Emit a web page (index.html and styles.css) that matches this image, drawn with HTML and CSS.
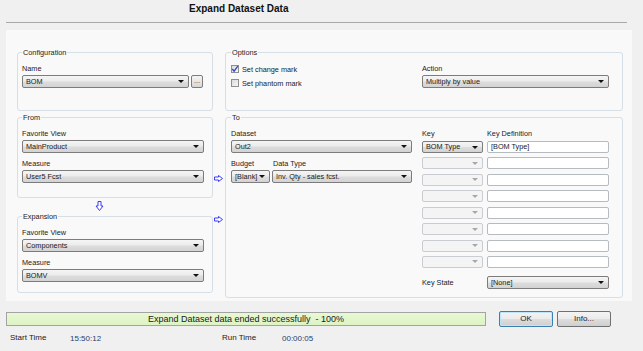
FILE: index.html
```html
<!DOCTYPE html>
<html lang="en">
<head>
  <meta charset="UTF-8" />
  <title>Expand Dataset Data</title>
  <link rel="stylesheet" href="styles.css">
</head>
<body>
  <h1 class="title">Expand Dataset Data</h1>
  <div class="rule"></div>

  <div class="panel">
    <div class="col-left">
      <fieldset class="group g-config">
        <legend>Configuration</legend>
        <div class="body">
          <div class="field">
            <span class="lbl">Name</span>
            <div class="row-inline">
              <div class="combo w-name">BOM</div>
              <div class="dots">...</div>
            </div>
          </div>
        </div>
      </fieldset>

      <fieldset class="group g-from">
        <legend>From</legend>
        <div class="body">
          <div class="field">
            <span class="lbl">Favorite View</span>
            <div class="combo">MainProduct</div>
          </div>
          <div class="field">
            <span class="lbl">Measure</span>
            <div class="combo">User5 Fcst</div>
          </div>
        </div>
      </fieldset>

      <div class="down">
        <svg width="9" height="10" viewBox="0 0 9 10"><path d="M3 0.5 H6 V5 H8 L4.5 9.5 L1 5 H3 Z" fill="#fff" stroke="#3b3bff" stroke-width="1"/></svg>
      </div>

      <fieldset class="group g-expansion">
        <legend>Expansion</legend>
        <div class="body">
          <div class="field">
            <span class="lbl">Favorite View</span>
            <div class="combo">Components</div>
          </div>
          <div class="field">
            <span class="lbl">Measure</span>
            <div class="combo">BOMV</div>
          </div>
        </div>
      </fieldset>
    </div>

    <div class="col-mid">
      <svg class="arrow a1" width="9" height="7" viewBox="0 0 9 7"><path d="M0.5 2 H4.5 V0.5 L8.5 3.5 L4.5 6.5 V5 H0.5 Z" fill="#fff" stroke="#3b3bff" stroke-width="1"/></svg>
      <svg class="arrow a2" width="9" height="7" viewBox="0 0 9 7"><path d="M0.5 2 H4.5 V0.5 L8.5 3.5 L4.5 6.5 V5 H0.5 Z" fill="#fff" stroke="#3b3bff" stroke-width="1"/></svg>
    </div>

    <div class="col-right">
      <fieldset class="group g-options">
        <legend>Options</legend>
        <div class="body options">
          <div class="checks">
            <label class="check"><span class="box"><svg width="8" height="8" viewBox="0 0 8 8"><path d="M1.3 4 L3.1 6.2 L6.8 1.2" fill="none" stroke="#2747c8" stroke-width="1.3"/></svg></span>Set change mark</label>
            <label class="check"><span class="box"></span>Set phantom mark</label>
          </div>
          <div class="field">
            <span class="lbl">Action</span>
            <div class="combo">Multiply by value</div>
          </div>
        </div>
      </fieldset>

      <fieldset class="group g-to">
        <legend>To</legend>
        <div class="body to">
          <div class="to-left">
            <div class="field">
              <span class="lbl">Dataset</span>
              <div class="combo">Out2</div>
            </div>
            <div class="field pair">
              <div class="budget">
                <span class="lbl">Budget</span>
                <div class="combo">[Blank]</div>
              </div>
              <div class="dtype">
                <span class="lbl">Data Type</span>
                <div class="combo">Inv. Qty - sales fcst.</div>
              </div>
            </div>
          </div>
          <div class="to-right">
            <div class="key-head">
              <span class="lbl k1">Key</span>
              <span class="lbl">Key Definition</span>
            </div>
            <div class="key-row"><div class="combo small">BOM Type</div><div class="input">[BOM Type]</div></div>
            <div class="key-row"><div class="combo small off"></div><div class="input"></div></div>
            <div class="key-row"><div class="combo small off"></div><div class="input"></div></div>
            <div class="key-row"><div class="combo small off"></div><div class="input"></div></div>
            <div class="key-row"><div class="combo small off"></div><div class="input"></div></div>
            <div class="key-row"><div class="combo small off"></div><div class="input"></div></div>
            <div class="key-row"><div class="combo small off"></div><div class="input"></div></div>
            <div class="key-row"><div class="combo small off"></div><div class="input"></div></div>
            <div class="key-state">
              <span class="lbl">Key State</span>
              <div class="combo">[None]</div>
            </div>
          </div>
        </div>
      </fieldset>
    </div>
  </div>

  <div class="footer">
    <div class="status">Expand Dataset data ended successfully  - 100%</div>
    <div class="btn default">OK</div>
    <div class="btn">Info...</div>
  </div>

  <div class="times">
    <span class="t-lbl">Start Time</span>
    <span class="t-val v1">15:50:12</span>
    <span class="t-lbl">Run Time</span>
    <span class="t-val">00:00:05</span>
  </div>
</body>
</html>
```

FILE: styles.css
```css
body {
  margin: 0;
  background-color: #f0f0f0;
  font-family: "Liberation Sans", Arial, sans-serif;
  font-size: 7.3px;
  color: #1b1b1b;
  width: 643px;
  height: 351px;
  overflow: hidden;
}
.title {
  margin: 3px 0 0 189px;
  font-size: 10px;
  line-height: 12px;
  font-weight: bold;
  color: #111;
}
.rule {
  margin: 7px 0 0 6px;
  width: 621px;
  height: 1px;
  background-color: #a9a9a9;
}
.panel {
  margin: 7px 0 0 6px;
  width: 626px;
  height: 271px;
  box-sizing: border-box;
  padding: 18px 9px 0 11px;
  background-color: #f9f9f9;
  display: flex;
}
.col-left {
  width: 196px;
  display: flex;
  flex-direction: column;
}
.col-mid {
  width: 12px;
  display: flex;
  flex-direction: column;
}
.col-right {
  width: 398px;
  display: flex;
  flex-direction: column;
}
.arrow {
  display: block;
  margin-left: 1px;
}
.a1 {
  margin-top: 127px;
}
.a2 {
  margin-top: 34px;
}

/* group boxes */
.group {
  margin: 0;
  padding: 0 8px 0 4px;
  border: 1px solid #d7dfe6;
  border-radius: 3px;
  box-sizing: border-box;
  min-width: 0;
}
.group legend {
  padding: 0 1px;
  font-size: 7.3px;
  line-height: 9px;
  color: #222;
}
.body {
  padding-top: 7px;
}
.g-config { height: 63px; margin-bottom: 2px; }
.g-from { height: 85px; }
.g-expansion { height: 81px; }
.g-options { height: 63px; margin-bottom: 2px; padding-left: 5px; }
.g-to { height: 185px; padding-left: 5px; }

.down {
  height: 14px;
  padding-left: 78px;
  box-sizing: border-box;
  padding-top: 3px;
}
.down svg {
  display: block;
}

/* fields */
.field + .field {
  margin-top: 6px;
}
.lbl {
  display: block;
  line-height: 9px;
  margin-bottom: 2px;
  white-space: nowrap;
}
.combo {
  position: relative;
  height: 13px;
  box-sizing: border-box;
  border: 1px solid #7c7c7c;
  border-radius: 2px;
  background: linear-gradient(#f5f5f5, #ebebeb 48%, #dddddd 52%, #d3d3d3);
  padding-left: 3px;
  line-height: 11px;
  white-space: nowrap;
  overflow: hidden;
}
.combo::after {
  content: "";
  position: absolute;
  right: 4px;
  top: 4px;
  border-left: 3px solid transparent;
  border-right: 3px solid transparent;
  border-top: 3px solid #111;
}
.combo.off {
  background: #f4f4f4;
  border-color: #c9cdd1;
}
.combo.off::after {
  border-top-color: #a8a8a8;
}
.row-inline {
  display: flex;
  gap: 2px;
}
.w-name {
  width: 167px;
}
.dots {
  width: 12px;
  height: 13px;
  box-sizing: border-box;
  border: 1px solid #7c7c7c;
  border-radius: 2px;
  background: linear-gradient(#f5f5f5, #e6e6e6 50%, #d6d6d6);
  text-align: center;
  line-height: 10px;
  color: #444;
}

/* options */
.options {
  display: flex;
}
.checks {
  width: 191px;
}
.check {
  display: flex;
  align-items: center;
  height: 10px;
  gap: 3px;
}
.check + .check {
  margin-top: 4px;
}
.box {
  width: 8px;
  height: 8px;
  box-sizing: border-box;
  border: 1px solid #8e8f8f;
  background: linear-gradient(135deg, #dcdcdc, #f6f6f6);
  display: flex;
  align-items: center;
  justify-content: center;
}
.box svg {
  margin: -1px;
}
.options .field {
  width: 187px;
}

/* to */
.to {
  display: flex;
  gap: 10px;
}
.to-left {
  width: 181px;
}
.pair {
  display: flex;
  gap: 2px;
}
.budget {
  width: 39px;
}
.dtype {
  width: 140px;
}
.dtype .lbl {
  padding-left: 1px;
}
.to-right {
  width: 187px;
}
.key-head {
  display: flex;
}
.key-head .lbl {
  margin-bottom: 3px;
}
.k1 {
  width: 65px;
}
.key-row {
  display: flex;
  gap: 4px;
  height: 12px;
}
.key-row + .key-row {
  margin-top: 4.43px;
}
.combo.small {
  width: 61px;
  height: 12px;
  line-height: 10px;
}
.combo.small::after {
  top: 3.5px;
}
.input {
  flex: 1;
  height: 12px;
  box-sizing: border-box;
  border: 1px solid #b6bbc0;
  border-radius: 2px;
  background-color: #fff;
  padding-left: 3px;
  line-height: 10px;
}
.key-state {
  display: flex;
  align-items: center;
  margin-top: 8px;
}
.key-state .lbl {
  width: 65px;
  margin: 0;
}
.key-state .combo {
  flex: 1;
}

/* footer */
.footer {
  margin: 10px 0 0 6px;
  display: flex;
  align-items: center;
  height: 16px;
}
.status {
  width: 480px;
  height: 14px;
  box-sizing: border-box;
  border: 1px solid #a3a3a3;
  background: linear-gradient(#e8f8d4, #ddf3c4);
  text-align: center;
  font-size: 9px;
  line-height: 12px;
  white-space: pre;
  color: #1a1a1a;
}
.btn {
  width: 54px;
  height: 16px;
  box-sizing: border-box;
  border: 1px solid #707070;
  border-radius: 2px;
  background: linear-gradient(#f4f4f4, #ebebeb 48%, #dddddd 52%, #cfcfcf);
  text-align: center;
  font-size: 8px;
  line-height: 14px;
  margin-left: 4px;
}
.btn.default {
  margin-left: 13px;
  border-color: #3c7fb1;
  box-shadow: inset 0 0 0 1px #bfe6f8;
}
.times {
  margin: 6px 0 0 10px;
  display: flex;
  font-size: 8px;
  line-height: 10px;
}
.t-lbl {
  width: 60px;
}
.t-val {
  color: #2b3e6c;
  padding-top: 1px;
}
.v1 {
  width: 152px;
}
```
